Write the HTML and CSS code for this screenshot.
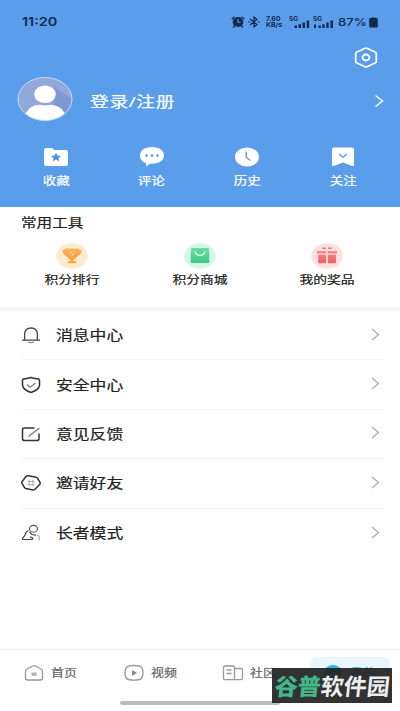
FILE: index.html
```html
<!DOCTYPE html>
<html lang="zh-CN">
<head>
<meta charset="utf-8">
<title>我的</title>
<link rel="stylesheet" href="styles.css">
</head>
<body>
<header class="hero">
  <div class="status">
    <span class="time">11:20</span>
    <div class="indicators">
      <svg class="alarm" width="14" height="12" viewBox="0 0 14 12"><ellipse cx="7" cy="6" rx="5.3" ry="5" fill="#102a4a"/><path d="M.7 3.2 3.5.7M13.3 3.2 10.500.7M2 11.500l2-2M12 11.500l-2-2" stroke="#102a4a" stroke-width="1.300"/><path d="M7 3v3.300h2.500" fill="none" stroke="#5a9deb" stroke-width="1.100"/></svg>
      <svg class="bt" width="12" height="12" viewBox="0 0 12 12"><path d="M2 3l7 5.500L6 11V1l3 2.500L2 9M.5 6h1.800M9.700 6h1.800" fill="none" stroke="#102a4a" stroke-width="1.200"/></svg>
      <div class="speed"><span>7.60</span><span>KB/s</span></div>
      <svg class="signal" width="21" height="13" viewBox="0 0 21 13"><text x="0" y="5" class="g" textLength="9" lengthAdjust="spacingAndGlyphs">5G</text><path d="M5.500 9.500h2.500V12H5.500zM9.500 8.200H12V12H9.500zM13.500 6.500H16V12h-2.500zM17.700 4.500h2.500V12h-2.500z" fill="#102a4a"/></svg>
      <svg class="signal2" width="21" height="13" viewBox="0 0 21 13"><text x="0" y="5" class="g" textLength="9" lengthAdjust="spacingAndGlyphs">5G</text><path d="M1 8.500h2V12H1zM5.500 9.500h2.300V12H5.500zM9.300 8.200h2.300V12H9.300zM13.300 6.500h2.300V12h-2.300zM17.500 4.500h2.500V12h-2.500z" fill="#102a4a"/></svg>
      <span class="battery-text">87%</span>
      <svg class="battery" width="9" height="11" viewBox="0 0 9 11"><path d="M2.500.5h4V1H8l.8 1v7.500L8 10.500H1L.2 9.500V2L1 1h1.500z" fill="#102a4a"/></svg>
    </div>
  </div>
  <div class="settings">
    <svg width="24" height="21" viewBox="0 0 24 21"><path d="M10.500 1.400q1.500-.8 3 0l7.600 3.500q1.200.6 1.200 1.700v7.800q0 1.100-1.200 1.700l-7.600 3.500q-1.500.8-3 0l-7.600-3.500q-1.200-.6-1.200-1.700V6.600q0-1.100 1.200-1.700z" fill="none" stroke="#fff" stroke-width="1.700"/><ellipse cx="12" cy="10.500" rx="3.500" ry="3" fill="none" stroke="#fff" stroke-width="1.800"/></svg>
  </div>
  <div class="profile">
    <svg class="avatar" width="56" height="46" viewBox="0 0 56 46">
      <defs><clipPath id="face"><ellipse cx="28" cy="23" rx="27" ry="21.500"/></clipPath></defs>
      <g clip-path="url(#face)"><path fill="#92a8da" d="M0 0h56v46H0z"/><path d="M37 11 56 24v22H36z" fill="#7f98d2"/><ellipse cx="28" cy="18.300" rx="10.800" ry="8.800" fill="#fff"/><path d="M9 37q4-8 14-8.200 5 1.400 10 0Q44 29 48 38v8H8z" fill="#fff"/></g>
      <ellipse cx="28" cy="23" rx="27" ry="21.500" fill="none" stroke="#c3ddf8" stroke-width="1"/>
    </svg>
    <span class="login">登录/注册</span>
    <svg class="go" width="10" height="14" viewBox="0 0 10 14"><path d="M1.500 1.500 8.500 7l-7 5.500" fill="none" stroke="#fff" stroke-width="1.500"/></svg>
  </div>
  <nav class="shortcuts">
    <a><svg width="26" height="20" viewBox="0 0 26 20"><path d="M3 1h6l2.500 2H23q2 0 2 2v12q0 2-2 2H3q-2 0-2-2V3q0-2 2-2z" fill="#fff"/><path d="m13 5.700 1.400 2.900 3.800.4-2.800 2.100.8 3.100-3.200-1.600-3.200 1.600.8-3.100L7.800 9l3.800-.4z" fill="#4c91e3"/></svg><span>收藏</span></a>
    <a><svg width="26" height="20" viewBox="0 0 26 20"><path d="M13 0C5 0 1 4 1 8.500s3 6.500 6 7.800V19.500l4-2.800C20 17.300 25 13.500 25 8.500S20 0 13 0z" fill="#fff"/><g fill="#5a9deb"><circle cx="7.500" cy="8.600" r="1.300"/><circle cx="13" cy="8.600" r="1.300"/><circle cx="18.500" cy="8.600" r="1.300"/></g></svg><span>评论</span></a>
    <a><svg width="26" height="20" viewBox="0 0 26 20"><ellipse cx="13" cy="10" rx="12" ry="9.600" fill="#fff"/><path d="M12.300 4.500v6l4 3" fill="none" stroke="#5a9deb" stroke-width="1.400"/></svg><span>历史</span></a>
    <a><svg width="26" height="20" viewBox="0 0 26 20"><path d="M4 .5h18q2 0 2 1.800V18q0 1.600-1.800.9L13 15.500l-9.200 3.400Q2 19.600 2 18V2.300Q2 .5 4 .5z" fill="#fff"/><path d="m9 7 4 3.300L17 7" fill="none" stroke="#5a9deb" stroke-width="1.300"/></svg><span>关注</span></a>
  </nav>
</header>
<section class="tools">
  <h2><span>常用工具</span></h2>
  <div class="tool-grid">
    <a><svg width="32" height="26" viewBox="0 0 32 26"><defs><linearGradient id="gold" x2="0" y2="1"><stop stop-color="#f7b25a"/><stop offset="1" stop-color="#fa9a30"/></linearGradient></defs><ellipse cx="16" cy="13" rx="15.800" ry="12.800" fill="#fdebcf"/><path d="M9 5.500h14l.4 1.500h2.200q.5 4-4.600 6.500-1.500 2.500-3.500 3v2h2.800v1.700h-8.600v-1.700h2.800v-2q-2-.5-3.500-3Q6 11 6.400 7h2.200z" fill="url(#gold)"/><path d="m13.500 11 3-2.800M15.500 13l3-2.800" stroke="#fff1dc" stroke-width="1"/></svg><span>积分排行</span></a>
    <a><svg width="32" height="26" viewBox="0 0 32 26"><defs><linearGradient id="green" x2="0" y2="1"><stop stop-color="#6bdda2"/><stop offset="1" stop-color="#3cc681"/></linearGradient></defs><ellipse cx="16" cy="13" rx="15.800" ry="12.800" fill="#d5f7e5"/><path d="M8 5h16q1 0 1 1l.4 13q0 1-1 1H7.600q-1 0-1-1L7 6q0-1 1-1z" fill="url(#green)"/><path d="M11 8.500q1 4 5 4t5-4" fill="none" stroke="#e8fff3" stroke-width="1.300"/></svg><span>积分商城</span></a>
    <a><svg width="32" height="26" viewBox="0 0 32 26"><defs><linearGradient id="red" x2="0" y2="1"><stop stop-color="#f58b87"/><stop offset="1" stop-color="#f15f62"/></linearGradient></defs><ellipse cx="16" cy="13" rx="15.800" ry="12.800" fill="#fde0df"/><path d="M6 8h20v2.500H6zM7.200 11.800h8v8.400H8.200q-1 0-1-1zM17 11.800h8v7.400q0 1-1 1h-7z" fill="url(#red)"/><path d="M11.500 5.300h3.300m2.400 0h3.300" stroke="#ee6b6b" stroke-width="1.400"/><path d="M16 8v12" stroke="#fde0df" stroke-width="1.300"/></svg><span>我的奖品</span></a>
  </div>
</section>
<main class="menu">
  <a class="row"><svg width="20" height="18" viewBox="0 0 20 18"><path d="M3.600 14V8Q4 2 10 2t6.400 6v6M1 14.200h18" fill="none" stroke="#444" stroke-width="1.300"/><path d="M7 16q3 1.500 6 0" fill="none" stroke="#777"/></svg><span>消息中心</span><svg class="chev" width="9" height="13" viewBox="0 0 9 13"><path d="m1 1 6.500 5.500L1 12" fill="none" stroke="#aaa" stroke-width="1.200"/></svg></a>
  <a class="row"><svg width="20" height="18" viewBox="0 0 20 18"><path d="M10 1.500q4 1.300 7.500 1.500 1 .2 1 1.200v5Q18 14 10 16.500 2 14 1.500 9.200v-5q0-1 1-1.200Q6 2.800 10 1.500z" fill="none" stroke="#333" stroke-width="1.500"/><path d="m6 8.500 3.200 2.700L14.500 7" fill="none" stroke="#777" stroke-width="1.100"/></svg><span>安全中心</span><svg class="chev" width="9" height="13" viewBox="0 0 9 13"><path d="m1 1 6.500 5.500L1 12" fill="none" stroke="#aaa" stroke-width="1.200"/></svg></a>
  <a class="row"><svg width="20" height="18" viewBox="0 0 20 18"><path d="M13.500 3H3.500Q1.500 3 1.500 4.700v9q0 1.800 2 1.800h12.500q2 0 2-1.800V8.500" fill="none" stroke="#333" stroke-width="1.500"/><path d="M7.500 11.500 18.500 3" stroke="#777" stroke-width="1.200"/></svg><span>意见反馈</span><svg class="chev" width="9" height="13" viewBox="0 0 9 13"><path d="m1 1 6.500 5.500L1 12" fill="none" stroke="#aaa" stroke-width="1.200"/></svg></a>
  <a class="row"><svg width="20" height="18" viewBox="0 0 20 18"><path d="M7.500 1.800 15 3.200q1.300.3 1.800 1.500l2.300 4q.4 1-.5 1.900l-4.300 4.500q-1 1.100-2.500.8L5 14.500q-1.300-.3-1.800-1.500L.9 9.200q-.4-1 .4-1.900L5 2.600q1-1.100 2.500-.8z" fill="none" stroke="#333" stroke-width="1.500"/><path d="M8.300 5.800v6.400M11.900 5.800v6.400M6.500 7.500h7.200M6.500 10.500h7.200" stroke="#aaa" stroke-width=".9"/></svg><span>邀请好友</span><svg class="chev" width="9" height="13" viewBox="0 0 9 13"><path d="m1 1 6.500 5.500L1 12" fill="none" stroke="#aaa" stroke-width="1.200"/></svg></a>
  <a class="row"><svg width="20" height="18" viewBox="0 0 20 18"><ellipse cx="12.500" cy="4.800" rx="4" ry="3.400" fill="none" stroke="#555" stroke-width="1.100"/><path d="M7.500 6.500Q4.800 7.500 4 11l-2.500 3.500q-.4 1 .7 1h8.500q1.500-.3.800-1.500L9 12.800M8.500 8l2.500 2.500 4 .7" fill="none" stroke="#444" stroke-width="1.200"/><path d="M15.500 12q2.500-1.300 2.700.5V16.500" fill="none" stroke="#999"/></svg><span>长者模式</span><svg class="chev" width="9" height="13" viewBox="0 0 9 13"><path d="m1 1 6.500 5.500L1 12" fill="none" stroke="#aaa" stroke-width="1.200"/></svg></a>
</main>
<footer class="tabbar">
  <a class="tab"><svg width="20" height="18" viewBox="0 0 20 18"><path d="m3 5 5.500-3q1.500-.8 3 0L17 5q1.500.7 1.500 2v7q0 2-2 2h-13q-2 0-2-2V7q0-1.300 1.500-2z" fill="none" stroke="#999" stroke-width="1.300"/><path d="M7.500 8.500h5v3.500h-5z" fill="#b5b5b5"/></svg><span>首页</span></a>
  <a class="tab"><svg width="20" height="18" viewBox="0 0 20 18"><path d="M10 1.500c7 0 9 1.500 9 7.300s-2 7.300-9 7.300-9-1.500-9-7.300 2-7.300 9-7.300z" fill="none" stroke="#999" stroke-width="1.300"/><path d="m8 6 5 3-5 3z" fill="#888"/></svg><span>视频</span></a>
  <a class="tab community"><svg width="22" height="18" viewBox="0 0 22 18"><path d="M3 2h8q1.500 0 1.500 1.500v12.200H3q-1.500 0-1.500-1.500V3.500Q1.500 2 3 2zM12.500 4.500H19q1.500 0 1.500 1.500v8.200q0 1.500-1.500 1.500h-6.500M4.500 6h5M4.500 9.500h5" fill="none" stroke="#999" stroke-width="1.300"/></svg><span>社区</span></a>
  <a class="tab active"><svg width="20" height="18" viewBox="0 0 20 18"><ellipse cx="10" cy="9" rx="8.800" ry="8" fill="#2bb5ee"/><path d="M6 10q4 4 8 0" fill="none" stroke="#fff" stroke-width="1.300"/></svg><span>我的</span></a>
  <div class="home-bar"></div>
  <div class="watermark"><span><b>谷普</b>软件园</span></div>
</footer>
</body>
</html>
```
FILE: styles.css
```css
* { box-sizing: border-box; }
body {
  margin: 0;
  width: 400px;
  height: 711px;
  overflow: hidden;
  display: flex;
  flex-direction: column;
  background: #fefefe;
  color: #222;
  font-family: "Noto Sans", "Noto Sans CJK SC", sans-serif;
}
svg { display: block; flex: none; }
.login, .shortcuts span, .tools span, .row span, .tab span, .time, .battery-text {
  display: inline-block;
  transform: scaleX(1.2);
  white-space: nowrap;
}
.login, .shortcuts span, .tools span, .row span, .tab span { -webkit-text-stroke: .2px currentColor; }
.hero { height: 207px; flex: none; background: #5a9deb; color: #fff; }
.status {
  height: 44px;
  padding: 0 22px;
  display: flex;
  align-items: center;
  justify-content: space-between;
  color: #102a4a;
}
.time {
  font: 600 12px/14px "Inter", sans-serif;
  transform-origin: left;
}
.indicators { display: flex; align-items: center; }
.bt { margin-left: 3px; }
.speed {
  margin-left: 6px;
  width: 17px;
  display: flex;
  flex-direction: column;
  font: 700 6px/6px "Inter", sans-serif;
}
.speed span { transform: scaleX(1.16); transform-origin: left; }
.signal { margin-left: 6px; }
.signal2 { margin-left: 3px; }
.g { font: 700 5.5px "Inter", sans-serif; fill: #102a4a; }
.battery-text {
  font: 500 11px/14px "Inter", sans-serif;
  width: 27px;
  margin-left: 4px;
  transform-origin: left;
}
.battery { margin-left: 4px; }
.settings {
  height: 27px;
  padding-right: 22px;
  display: flex;
  align-items: center;
  justify-content: flex-end;
}
.profile {
  height: 56px;
  padding: 0 16px 0 17px;
  display: flex;
  align-items: center;
}
.login {
  margin-left: 17px;
  font-size: 15px;
  letter-spacing: .5px;
  line-height: 20px;
  margin-top: 3px;
  transform: scaleX(1.25);
  transform-origin: left;
}
.go { margin-left: auto; margin-top: 4px; }
.shortcuts { display: flex; padding: 20px 9px 0 8px; }
.shortcuts a {
  flex: 1;
  display: flex;
  flex-direction: column;
  align-items: center;
  gap: 6px;
  font-size: 11.3px;
  line-height: 16px;
}
.tools { height: 100px; flex: none; }
.tools h2 {
  margin: 0;
  padding: 7px 21px 0;
  font-size: 13px;
  font-weight: 400;
  line-height: 16px;
}
.tools h2 span { transform-origin: left; }
.tool-grid { display: flex; padding: 13px 9px 0 8px; }
.tool-grid a {
  flex: 1;
  display: flex;
  flex-direction: column;
  align-items: center;
  gap: 3px;
  font-size: 11.5px;
  line-height: 16px;
}
.menu { border-top: 4px solid #f5f5f5; flex: 1; }
.row {
  height: 49.4px;
  margin-left: 21px;
  margin-right: 15px;
  padding-right: 4px;
  display: flex;
  align-items: center;
  border-bottom: 1px solid #f4f4f4;
}
.row:last-child { border-bottom: 0; }
.row span {
  margin-left: 15px;
  font-size: 14px;
  line-height: 20px;
  transform-origin: left;
}
.row .chev { margin: 0 1px 2px auto; }
.tabbar {
  position: relative;
  height: 62px;
  flex: none;
  display: flex;
  justify-content: space-between;
  padding: 7px 11px 0 12px;
  border-top: 1px solid #efefef;
}
.tab {
  width: 78px;
  height: 32px;
  padding-left: 12px;
  display: flex;
  align-items: center;
  gap: 7px;
  font-size: 10.8px;
  line-height: 16px;
  color: #666;
}
.tab.community { padding-left: 11px; gap: 6px; }
.tab span { transform-origin: left; }
.tab.active { background: #e8f6fd; border-radius: 5px; color: #2caee8; }
.home-bar {
  position: absolute;
  left: 120px;
  top: 51px;
  width: 160px;
  height: 4px;
  border-radius: 2px;
  background: #bbb;
}
.watermark {
  position: absolute;
  left: 272px;
  top: 18px;
  width: 120px;
  height: 35px;
  display: flex;
  align-items: center;
  justify-content: center;
  background: rgba(34, 34, 34, .93);
  color: #eee;
  font-size: 23px;
  font-weight: 700;
  line-height: 30px;
  white-space: nowrap;
}
.watermark span { transform: skewX(-6deg); }
.watermark b { color: #43b78a; }
```
